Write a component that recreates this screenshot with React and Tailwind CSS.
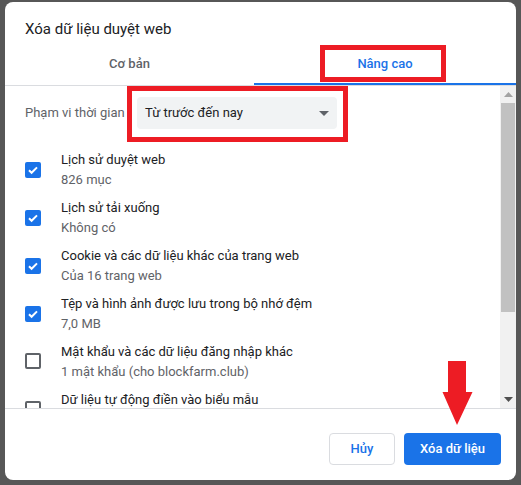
import { useState } from "react";

const items = [
  { title: "Lịch sử duyệt web", sub: "826 mục", checked: true },
  { title: "Lịch sử tải xuống", sub: "Không có", checked: true },
  { title: "Cookie và các dữ liệu khác của trang web", sub: "Của 16 trang web", checked: true },
  { title: "Tệp và hình ảnh được lưu trong bộ nhớ đệm", sub: "7,0 MB", checked: true },
  { title: "Mật khẩu và các dữ liệu đăng nhập khác", sub: "1 mật khẩu (cho blockfarm.club)", checked: false },
  { title: "Dữ liệu tự động điền vào biểu mẫu", sub: "", checked: false },
];

function Checkbox({ checked, onClick }) {
  if (checked) {
    return (
      <button onClick={onClick} className="w-4 h-4 rounded-[2px] bg-[#1a73e8] flex items-center justify-center shrink-0">
        <svg width="12" height="12" viewBox="0 0 12 12" fill="none">
          <path d="M2 6.2l2.6 2.6L10 3.4" stroke="white" strokeWidth="2" />
        </svg>
      </button>
    );
  }
  return <button onClick={onClick} className="w-4 h-4 rounded-[2px] border-2 border-[#5f6368] shrink-0" />;
}

export default function App() {
  const [checks, setChecks] = useState(items.map((i) => i.checked));
  const [tab, setTab] = useState(1);

  return (
    <div className="relative w-[521px] h-[485px] overflow-hidden bg-[#575757] pt-[2px] pl-[5px] font-['Roboto',sans-serif]">
      <div className="w-[511px] h-[478px] bg-white rounded-lg flex flex-col overflow-hidden">
        {/* title */}
        <div className="h-[43px] pl-5 pt-[17px] text-[15px] leading-[20px] text-[#202124]">
          Xóa dữ liệu duyệt web
        </div>

        {/* tabs */}
        <div className="grid grid-cols-[249px_1fr] border-b border-[#dadce0]">
          {["Cơ bản", "Nâng cao"].map((t, i) => (
            <button key={t} onClick={() => setTab(i)} className="flex flex-col">
              <span
                className={
                  "h-[38px] flex items-center justify-center text-[13px] font-medium " +
                  (tab === i ? "text-[#1a73e8]" : "text-[#5f6368]")
                }
              >
                {t}
              </span>
              <span className={"h-[2px] w-full " + (tab === i ? "bg-[#1a73e8]" : "bg-transparent")} />
            </button>
          ))}
        </div>

        {/* content */}
        <div className="h-[322px] flex">
          <div className="flex-1 overflow-hidden pl-5 pt-[11px]">
            <div className="flex items-center h-8">
              <span className="w-[112px] text-[13px] text-[#5f6368]">Phạm vi thời gian</span>
              <div className="w-[200px] h-8 rounded bg-[#f1f3f4] flex items-center justify-between pl-2 pr-2">
                <span className="text-[13px] text-[#202124]">Từ trước đến nay</span>
                <svg width="10" height="5" viewBox="0 0 10 5">
                  <path d="M0 0h10L5 5z" fill="#5f6368" />
                </svg>
              </div>
            </div>

            <div className="mt-[21px] flex flex-col gap-2">
              {items.map((it, i) => (
                <div key={it.title} className="flex items-center h-10">
                  <div className="w-9">
                    <Checkbox
                      checked={checks[i]}
                      onClick={() => setChecks(checks.map((c, j) => (j === i ? !c : c)))}
                    />
                  </div>
                  <div className="flex flex-col text-[13px] leading-5">
                    <span className="text-[#202124]">{it.title}</span>
                    <span className="min-h-5 text-[#5f6368]">{it.sub}</span>
                  </div>
                </div>
              ))}
            </div>
          </div>

          {/* scrollbar */}
          <div className="w-4 bg-[#f1f1f1] flex flex-col">
            <div className="h-[17px] flex items-center justify-center">
              <svg width="9" height="5" viewBox="0 0 9 5">
                <path d="M0 5h9L4.5 0z" fill="#a3a3a3" />
              </svg>
            </div>
            <div className="h-[209px] mx-[1px] bg-[#c1c1c1]" />
            <div className="flex-1" />
            <div className="h-[17px] flex items-center justify-center">
              <svg width="9" height="5" viewBox="0 0 9 5">
                <path d="M0 0h9L4.5 5z" fill="#505050" />
              </svg>
            </div>
          </div>
        </div>

        {/* footer */}
        <div className="flex-1 border-t border-[#dadce0] flex justify-end items-start gap-[9px] pt-6 pr-[15px]">
          <button className="w-[66px] h-8 rounded border border-[#dadce0] text-[13px] font-medium text-[#1a73e8]">
            Hủy
          </button>
          <button className="w-[97px] h-8 rounded bg-[#1a73e8] text-[13px] font-medium text-white">
            Xóa dữ liệu
          </button>
        </div>
      </div>

      {/* annotations */}
      <div className="absolute left-[320px] top-[45px] w-[126px] h-[37px] border-[5px] border-[#ed1c24]" />
      <div className="absolute left-[127px] top-[86px] w-[221px] h-[56px] border-[5px] border-[#ed1c24]" />
      <svg className="absolute left-[442px] top-[360px]" width="31" height="66" viewBox="0 0 31 66">
        <path d="M6 1h18v31h6.5L15 65 0.5 32H6z" fill="#ed1c24" />
      </svg>
    </div>
  );
}
